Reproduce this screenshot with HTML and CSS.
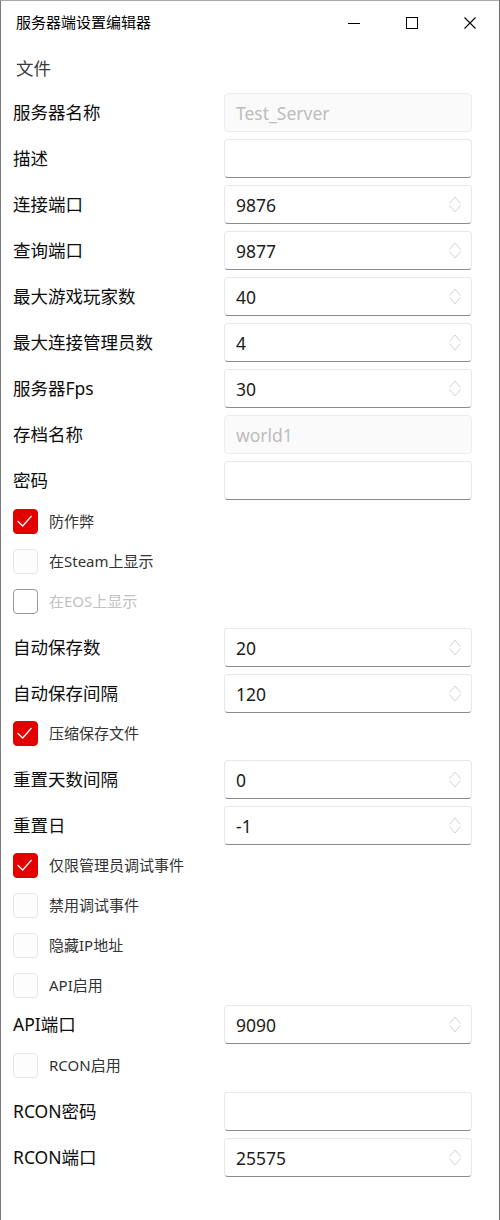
FILE: index.html
```html
<!DOCTYPE html>
<html lang="zh">
<head>
<meta charset="utf-8">
<title>服务器端设置编辑器</title>
<link rel="stylesheet" href="styles.css">
</head>
<body>
<div class="window">
  <div class="titlebar">
    <span class="title">服务器端设置编辑器</span>
    <div class="controls">
      <span class="ctl"><svg width="12" height="12" viewBox="0 0 12 12"><path d="M0 6.5H12" stroke="#000" stroke-width="1"/></svg></span>
      <span class="ctl"><svg width="12" height="12" viewBox="0 0 12 12"><rect x="0.5" y="0.5" width="11" height="11" fill="none" stroke="#000" stroke-width="1"/></svg></span>
      <span class="ctl"><svg width="12" height="12" viewBox="0 0 12 12"><path d="M0.5 0.5L11.5 11.5M11.5 0.5L0.5 11.5" stroke="#000" stroke-width="1.1"/></svg></span>
    </div>
  </div>
  <div class="menubar"><span class="menu-item">文件</span></div>
  <div class="form">
    <div class="field first"><span class="label">服务器名称</span><div class="input disabled">Test_Server</div></div>
    <div class="field"><span class="label">描述</span><div class="input"></div></div>
    <div class="field"><span class="label">连接端口</span><div class="input spin">9876<svg class="arrows" width="12" height="17" viewBox="0 0 12 17"><path d="M0.5 7.5L6 1L11.5 7.5M0.5 9.5L6 16L11.5 9.5" fill="none" stroke="#d2d2d2" stroke-width="1"/></svg></div></div>
    <div class="field"><span class="label">查询端口</span><div class="input spin">9877<svg class="arrows" width="12" height="17" viewBox="0 0 12 17"><path d="M0.5 7.5L6 1L11.5 7.5M0.5 9.5L6 16L11.5 9.5" fill="none" stroke="#d2d2d2" stroke-width="1"/></svg></div></div>
    <div class="field"><span class="label">最大游戏玩家数</span><div class="input spin">40<svg class="arrows" width="12" height="17" viewBox="0 0 12 17"><path d="M0.5 7.5L6 1L11.5 7.5M0.5 9.5L6 16L11.5 9.5" fill="none" stroke="#d2d2d2" stroke-width="1"/></svg></div></div>
    <div class="field"><span class="label">最大连接管理员数</span><div class="input spin">4<svg class="arrows" width="12" height="17" viewBox="0 0 12 17"><path d="M0.5 7.5L6 1L11.5 7.5M0.5 9.5L6 16L11.5 9.5" fill="none" stroke="#d2d2d2" stroke-width="1"/></svg></div></div>
    <div class="field"><span class="label">服务器Fps</span><div class="input spin">30<svg class="arrows" width="12" height="17" viewBox="0 0 12 17"><path d="M0.5 7.5L6 1L11.5 7.5M0.5 9.5L6 16L11.5 9.5" fill="none" stroke="#d2d2d2" stroke-width="1"/></svg></div></div>
    <div class="field"><span class="label">存档名称</span><div class="input disabled">world1</div></div>
    <div class="field"><span class="label">密码</span><div class="input"></div></div>

    <div class="check after-field"><span class="box checked"><svg width="25" height="25" viewBox="0 0 25 25"><path d="M4.5 12L9.7 17L18.5 7" fill="none" stroke="#fff" stroke-width="1.3"/></svg></span><span class="check-label">防作弊</span></div>
    <div class="check"><span class="box"></span><span class="check-label">在Steam上显示</span></div>
    <div class="check"><span class="box off"></span><span class="check-label off">在EOS上显示</span></div>

    <div class="field after-check"><span class="label">自动保存数</span><div class="input spin">20<svg class="arrows" width="12" height="17" viewBox="0 0 12 17"><path d="M0.5 7.5L6 1L11.5 7.5M0.5 9.5L6 16L11.5 9.5" fill="none" stroke="#d2d2d2" stroke-width="1"/></svg></div></div>
    <div class="field"><span class="label">自动保存间隔</span><div class="input spin">120<svg class="arrows" width="12" height="17" viewBox="0 0 12 17"><path d="M0.5 7.5L6 1L11.5 7.5M0.5 9.5L6 16L11.5 9.5" fill="none" stroke="#d2d2d2" stroke-width="1"/></svg></div></div>

    <div class="check after-field near"><span class="box checked"><svg width="25" height="25" viewBox="0 0 25 25"><path d="M4.5 12L9.7 17L18.5 7" fill="none" stroke="#fff" stroke-width="1.3"/></svg></span><span class="check-label">压缩保存文件</span></div>

    <div class="field after-check"><span class="label">重置天数间隔</span><div class="input spin">0<svg class="arrows" width="12" height="17" viewBox="0 0 12 17"><path d="M0.5 7.5L6 1L11.5 7.5M0.5 9.5L6 16L11.5 9.5" fill="none" stroke="#d2d2d2" stroke-width="1"/></svg></div></div>
    <div class="field"><span class="label">重置日</span><div class="input spin">-1<svg class="arrows" width="12" height="17" viewBox="0 0 12 17"><path d="M0.5 7.5L6 1L11.5 7.5M0.5 9.5L6 16L11.5 9.5" fill="none" stroke="#d2d2d2" stroke-width="1"/></svg></div></div>

    <div class="check after-field near"><span class="box checked"><svg width="25" height="25" viewBox="0 0 25 25"><path d="M4.5 12L9.7 17L18.5 7" fill="none" stroke="#fff" stroke-width="1.3"/></svg></span><span class="check-label">仅限管理员调试事件</span></div>
    <div class="check"><span class="box"></span><span class="check-label">禁用调试事件</span></div>
    <div class="check"><span class="box"></span><span class="check-label">隐藏IP地址</span></div>
    <div class="check"><span class="box"></span><span class="check-label">API启用</span></div>

    <div class="field after-check tight"><span class="label">API端口</span><div class="input spin">9090<svg class="arrows" width="12" height="17" viewBox="0 0 12 17"><path d="M0.5 7.5L6 1L11.5 7.5M0.5 9.5L6 16L11.5 9.5" fill="none" stroke="#d2d2d2" stroke-width="1"/></svg></div></div>

    <div class="check after-field"><span class="box"></span><span class="check-label">RCON启用</span></div>

    <div class="field after-check"><span class="label">RCON密码</span><div class="input"></div></div>
    <div class="field"><span class="label">RCON端口</span><div class="input spin">25575<svg class="arrows" width="12" height="17" viewBox="0 0 12 17"><path d="M0.5 7.5L6 1L11.5 7.5M0.5 9.5L6 16L11.5 9.5" fill="none" stroke="#d2d2d2" stroke-width="1"/></svg></div></div>
  </div>
</div>
</body>
</html>
```

FILE: styles.css
```css
html, body {
  margin: 0;
  padding: 0;
  background: #ffffff;
}

body {
  font-family: "Noto Sans", "Noto Sans CJK SC", sans-serif;
  color: #1a1a1a;
}

.window {
  box-sizing: border-box;
  width: 500px;
  height: 1220px;
  border-left: 1px solid #7a7a7a;
  border-right: 1px solid #6e6e6e;
  border-top: 1px solid #a8a8a8;
  background: #ffffff;
  display: flex;
  flex-direction: column;
}

.titlebar {
  height: 44px;
  display: flex;
  align-items: center;
  padding-left: 15px;
}

.title {
  font-size: 15px;
  line-height: 20px;
  color: #000;
  margin-top: -2px;
}

.controls {
  margin-left: auto;
  display: flex;
  height: 100%;
}

.ctl {
  width: 58px;
  display: flex;
  align-items: center;
  justify-content: center;
  margin-top: -1px;
}

.menubar {
  height: 48px;
  display: flex;
  align-items: center;
  padding-left: 15px;
}

.menu-item {
  font-size: 17.5px;
  line-height: 22px;
  color: #3a3a3a;
  margin-top: -2px;
}

.form {
  display: flex;
  flex-direction: column;
  padding-left: 12px;
}

.field {
  display: grid;
  grid-template-columns: 211px 248px;
  align-items: center;
  height: 39px;
  margin-top: 7px;
}

.field.first {
  margin-top: 0;
}

.field.after-check {
  margin-top: 14px;
}

.field.tight {
  margin-top: 7px;
}

.label {
  font-size: 17.5px;
  line-height: 22px;
  color: #0d0d0d;
  white-space: nowrap;
  margin-top: -1px;
}

.input {
  box-sizing: border-box;
  height: 39px;
  border: 1px solid #e8e8e8;
  border-bottom: 1px solid #8c8c8c;
  border-radius: 4px;
  background: #ffffff;
  padding-left: 11px;
  padding-right: 10px;
  display: flex;
  align-items: center;
  font-size: 17.5px;
  color: #1c1c1c;
}

.input.disabled {
  background: #fafafa;
  border: 1px solid #ededed;
  color: #bdbdbd;
}

.arrows {
  margin-left: auto;
}

.check {
  display: flex;
  align-items: center;
  height: 25px;
  margin-top: 15px;
}

.check.after-field {
  margin-top: 9px;
}

.check.after-field.near {
  margin-top: 8px;
}

.box {
  box-sizing: border-box;
  width: 25px;
  height: 25px;
  border: 1px solid #e6e6e6;
  border-radius: 4px;
  background: #fdfdfd;
  flex: none;
  display: block;
}

.box svg {
  display: block;
  margin: -1px;
}

.box.checked {
  background: #e50000;
  border-color: #e50000;
}

.box.off {
  border: 1.5px solid #9a9a9a;
  background: #ffffff;
}

.check-label {
  margin-left: 11px;
  font-size: 15px;
  line-height: 20px;
  color: #333;
  margin-top: -2px;
}

.check-label.off {
  color: #c2c2c2;
}
```
